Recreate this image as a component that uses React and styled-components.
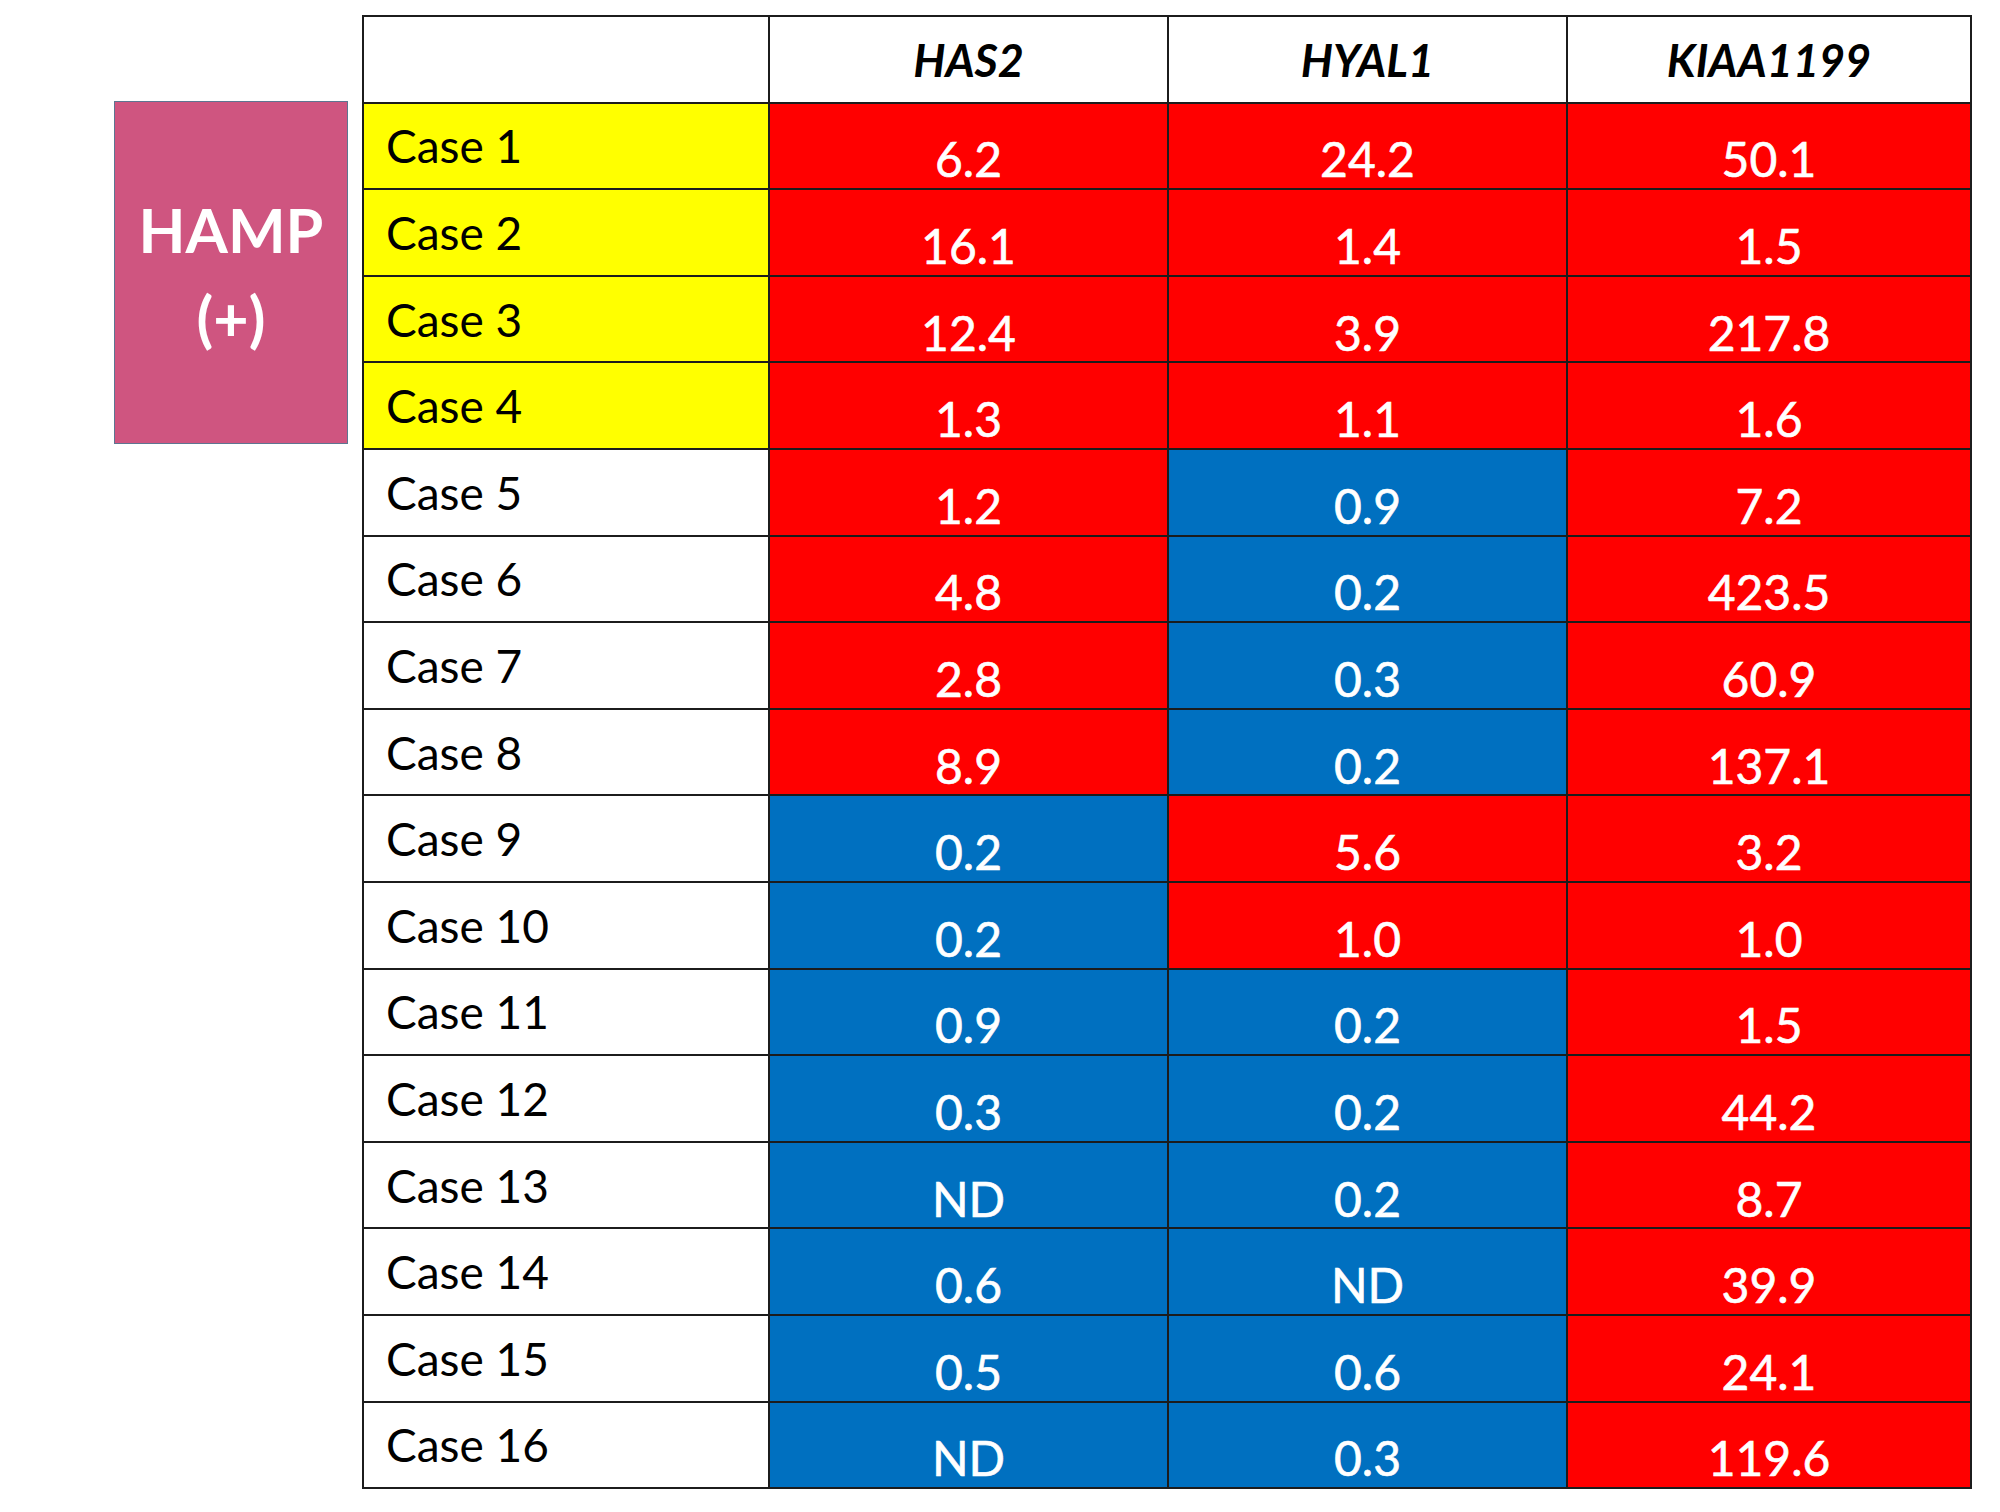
import React from 'react'
import styled, { createGlobalStyle } from 'styled-components'

const GlobalStyle = createGlobalStyle`
  html, body {
    margin: 0;
    padding: 0;
    background: #ffffff;
  }
  body {
    font-family: Lato, "Open Sans", sans-serif;
  }
`

const genes = ['HAS2', 'HYAL1', 'KIAA1199']

const cases = [
  { name: 'Case 1', hamp: true, values: ['6.2', '24.2', '50.1'] },
  { name: 'Case 2', hamp: true, values: ['16.1', '1.4', '1.5'] },
  { name: 'Case 3', hamp: true, values: ['12.4', '3.9', '217.8'] },
  { name: 'Case 4', hamp: true, values: ['1.3', '1.1', '1.6'] },
  { name: 'Case 5', values: ['1.2', '0.9', '7.2'] },
  { name: 'Case 6', values: ['4.8', '0.2', '423.5'] },
  { name: 'Case 7', values: ['2.8', '0.3', '60.9'] },
  { name: 'Case 8', values: ['8.9', '0.2', '137.1'] },
  { name: 'Case 9', values: ['0.2', '5.6', '3.2'] },
  { name: 'Case 10', values: ['0.2', '1.0', '1.0'] },
  { name: 'Case 11', values: ['0.9', '0.2', '1.5'] },
  { name: 'Case 12', values: ['0.3', '0.2', '44.2'] },
  { name: 'Case 13', values: ['ND', '0.2', '8.7'] },
  { name: 'Case 14', values: ['0.6', 'ND', '39.9'] },
  { name: 'Case 15', values: ['0.5', '0.6', '24.1'] },
  { name: 'Case 16', values: ['ND', '0.3', '119.6'] },
]

// up-regulated (>= 1.0) is red, down or not detected is blue
const isUp = (v) => v !== 'ND' && parseFloat(v) >= 1.0

const App = () => {
  return (
    <Page>
      <GlobalStyle />
      <HampTag>
        <span>HAMP</span>
        <span>(+)</span>
      </HampTag>

      <Grid>
        <HeadCell />
        {genes.map((g) => (
          <HeadCell key={g}>{g}</HeadCell>
        ))}

        {cases.map((c) => (
          <React.Fragment key={c.name}>
            <CaseCell $hamp={c.hamp}>{c.name}</CaseCell>
            {c.values.map((v, i) => (
              <ValueCell key={i} $up={isUp(v)}>
                {v}
              </ValueCell>
            ))}
          </React.Fragment>
        ))}
      </Grid>
    </Page>
  )
}

const Page = styled.div`
  display: flex;
  align-items: flex-start;
  gap: 14px;
  padding: 15px 0 0 114px;
`

const HampTag = styled.div`
  box-sizing: border-box;
  width: 234px;
  height: 343px;
  margin-top: 86px;
  background: #cf5580;
  border: 1px solid #5d7591;
  display: flex;
  flex-direction: column;
  align-items: center;
  justify-content: center;
  color: #ffffff;
  font-family: Lato, "Open Sans", sans-serif;
  font-weight: 700;
  font-size: 61px;
  line-height: 88px;
  padding-top: 2px;
`

const Grid = styled.div`
  display: grid;
  grid-template-columns: 404px 397px 397px 402px;
  grid-auto-rows: 84.6px;
  gap: 2px;
  border: 2px solid #1c1c1c;
  background: #1c1c1c;
`

const HeadCell = styled.div`
  background: #ffffff;
  display: flex;
  align-items: center;
  justify-content: center;
  color: #000000;
  font-family: Lato, "Open Sans", sans-serif;
  font-weight: 700;
  font-style: italic;
  font-size: 45px;
  padding-top: 2px;
`

const CaseCell = styled.div`
  background: ${(p) => (p.$hamp ? '#ffff00' : '#ffffff')};
  display: flex;
  align-items: center;
  padding-left: 22px;
  color: #000000;
  font-family: Lato, "Open Sans", sans-serif;
  font-size: 46px;
`

const ValueCell = styled.div`
  background: ${(p) => (p.$up ? '#ff0000' : '#0070c0')};
  display: flex;
  align-items: center;
  justify-content: center;
  padding-top: 26px;
  color: #ffffff;
  font-family: Lato, "Open Sans", sans-serif;
  font-size: 48px;
  -webkit-text-stroke: 0.6px #ffffff;
`

export default App
